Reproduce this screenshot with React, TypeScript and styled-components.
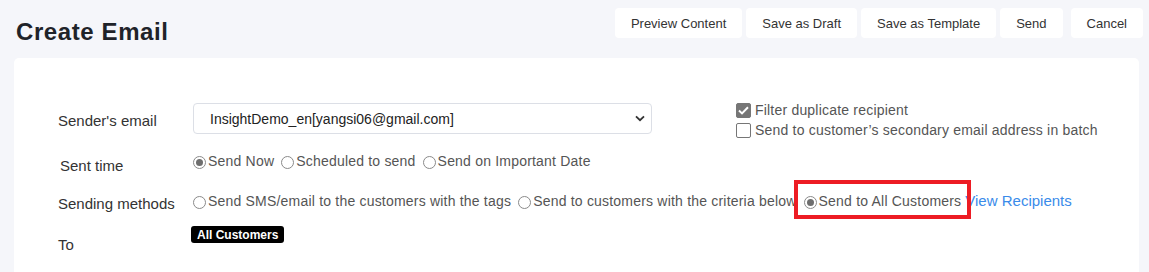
import React from "react";
import styled, { createGlobalStyle } from "styled-components";

const GlobalStyle = createGlobalStyle`
  html, body {
    margin: 0;
    padding: 0;
    background: #f5f6fa;
    font-family: "Liberation Sans", Arial, sans-serif;
  }
  * { box-sizing: border-box; }
`;

const Page = styled.div`
  width: 1149px;
  height: 272px;
  overflow: hidden;
  background: #f5f6fa;
`;

const Header = styled.header`
  height: 58px;
  display: flex;
  justify-content: space-between;
  align-items: flex-start;
  padding: 8px 6px 0 16px;
`;

const Title = styled.h1`
  margin: 12px 0 0;
  font-size: 24px;
  line-height: 24px;
  font-weight: 700;
  letter-spacing: 0.6px;
  color: #1f2329;
`;

const Toolbar = styled.div`
  display: flex;
  gap: 4px;
`;

const ToolButton = styled.button<{ $spaced?: boolean }>`
  height: 30px;
  padding: 0 16px;
  margin-left: ${(p) => (p.$spaced ? "4px" : "0")};
  border: none;
  border-radius: 4px;
  background: #ffffff;
  font-family: "Liberation Sans", Arial, sans-serif;
  font-size: 13px;
  color: #333333;
  cursor: pointer;
`;

const Card = styled.section`
  margin: 0 10px 0 14px;
  min-height: 240px;
  background: #ffffff;
  border-radius: 5px;
  padding: 45px 0 30px 44px;
`;

const Row = styled.div<{ $mt: number }>`
  display: flex;
  align-items: flex-start;
  margin-top: ${(p) => p.$mt}px;
`;

const FieldLabel = styled.div<{ $pt: number; $pl?: number }>`
  width: 135px;
  flex: none;
  padding-top: ${(p) => p.$pt}px;
  padding-left: ${(p) => p.$pl ?? 0}px;
  font-size: 15px;
  line-height: 20px;
  color: #333333;
`;

const SelectBox = styled.div`
  width: 459px;
  height: 31px;
  border: 1px solid #dcdfe6;
  border-radius: 4px;
  display: flex;
  align-items: center;
  justify-content: space-between;
  padding: 0 6px 0 16px;
  font-size: 14px;
  color: #222222;
`;

const CheckColumn = styled.div`
  margin: -3px 0 0 84px;
  display: flex;
  flex-direction: column;
`;

const CheckLine = styled.label`
  display: flex;
  align-items: center;
  gap: 4px;
  height: 20px;
  font-size: 14px;
  letter-spacing: 0.2px;
  color: #555555;
`;

const CheckBox = styled.span<{ $on?: boolean }>`
  width: 15px;
  height: 15px;
  border-radius: 2px;
  border: 1px solid #767676;
  background: ${(p) => (p.$on ? "#767676" : "#ffffff")};
  display: inline-flex;
  align-items: center;
  justify-content: center;
  flex: none;
`;

const OptionGroup = styled.div`
  display: flex;
  align-items: center;
  gap: 7px;
  height: 20px;
`;

const Option = styled.label<{ $marked?: boolean }>`
  position: relative;
  display: inline-flex;
  align-items: center;
  gap: 2px;
  font-size: 14px;
  line-height: 20px;
  letter-spacing: 0.2px;
  color: #555555;
  white-space: nowrap;

  &::after {
    content: "";
    display: ${(p) => (p.$marked ? "block" : "none")};
    position: absolute;
    left: -10px;
    right: -10px;
    top: -11px;
    bottom: -8px;
    border: 4px solid #ed1c24;
    z-index: 2;
  }
`;

const RadioDot = styled.span<{ $on?: boolean }>`
  width: 13px;
  height: 13px;
  border-radius: 50%;
  border: 1px solid #8a8a8a;
  background: #ffffff;
  display: inline-flex;
  align-items: center;
  justify-content: center;
  flex: none;
  margin-top: 2px;

  &::before {
    content: "";
    width: 7px;
    height: 7px;
    border-radius: 50%;
    background: ${(p) => (p.$on ? "#6e6e6e" : "transparent")};
  }
`;

const LinkText = styled.a`
  margin-left: -3px;
  font-size: 15px;
  line-height: 20px;
  color: #3a8bea;
  text-decoration: none;
  white-space: nowrap;
`;

const Badge = styled.span`
  display: inline-flex;
  align-items: center;
  height: 17px;
  margin-left: -2px;
  padding: 0 6px;
  border-radius: 3px;
  background: #000000;
  color: #ffffff;
  font-size: 12px;
  font-weight: 700;
`;

const Chevron = () => (
  <svg width="10" height="7" viewBox="0 0 10 7">
    <path d="M1 1.3 L5 5.2 L9 1.3" fill="none" stroke="#333" strokeWidth="1.8" />
  </svg>
);

const Tick = () => (
  <svg width="11" height="9" viewBox="0 0 11 9">
    <path d="M1 4.6 L4 7.4 L10 1.2" fill="none" stroke="#fff" strokeWidth="2" />
  </svg>
);

export default function App() {
  return (
    <Page>
      <GlobalStyle />
      <Header>
        <Title>Create Email</Title>
        <Toolbar>
          <ToolButton>Preview Content</ToolButton>
          <ToolButton>Save as Draft</ToolButton>
          <ToolButton>Save as Template</ToolButton>
          <ToolButton>Send</ToolButton>
          <ToolButton $spaced>Cancel</ToolButton>
        </Toolbar>
      </Header>
      <Card>
        <Row $mt={0}>
          <FieldLabel $pt={8}>Sender's email</FieldLabel>
          <SelectBox>
            <span>InsightDemo_en[yangsi06@gmail.com]</span>
            <Chevron />
          </SelectBox>
          <CheckColumn>
            <CheckLine>
              <CheckBox $on>
                <Tick />
              </CheckBox>
              Filter duplicate recipient
            </CheckLine>
            <CheckLine>
              <CheckBox />
              Send to customer’s secondary email address in batch
            </CheckLine>
          </CheckColumn>
        </Row>
        <Row $mt={11}>
          <FieldLabel $pt={5} $pl={2}>Sent time</FieldLabel>
          <OptionGroup>
            <Option>
              <RadioDot $on />
              Send Now
            </Option>
            <Option>
              <RadioDot />
              Scheduled to send
            </Option>
            <Option>
              <RadioDot />
              Send on Important Date
            </Option>
          </OptionGroup>
        </Row>
        <Row $mt={15}>
          <FieldLabel $pt={3}>Sending methods</FieldLabel>
          <OptionGroup>
            <Option>
              <RadioDot />
              Send SMS/email to the customers with the tags
            </Option>
            <Option>
              <RadioDot />
              Send to customers with the criteria below
            </Option>
            <Option $marked>
              <RadioDot $on />
              Send to All Customers
            </Option>
            <LinkText href="#">View Recipients</LinkText>
          </OptionGroup>
        </Row>
        <Row $mt={12}>
          <FieldLabel $pt={9}>To</FieldLabel>
          <Badge>All Customers</Badge>
        </Row>
      </Card>
    </Page>
  );
}
